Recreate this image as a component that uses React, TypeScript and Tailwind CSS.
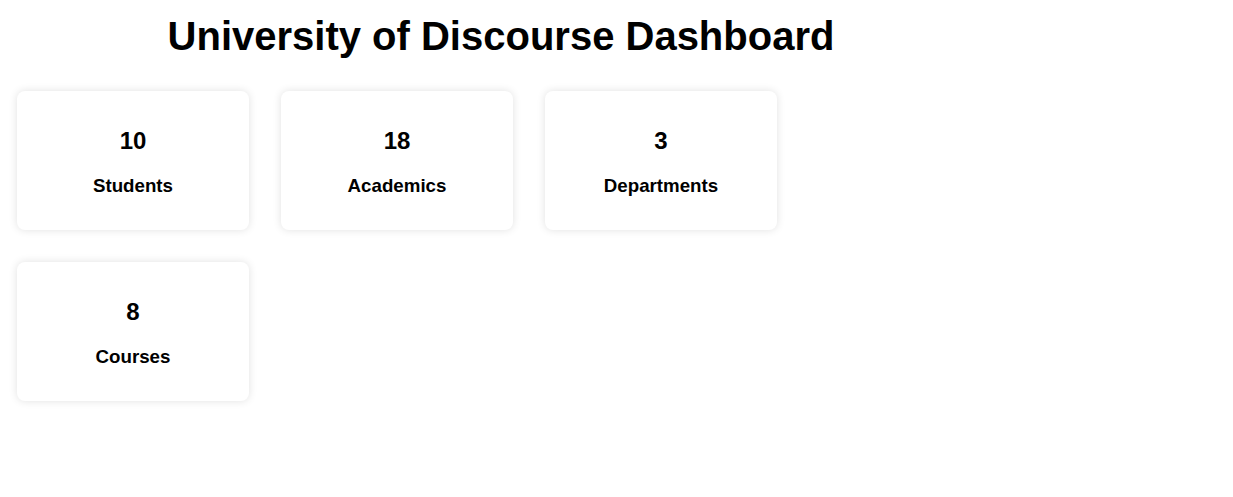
import React from "react";

const stats = [
  { value: 10, label: "Students" },
  { value: 18, label: "Academics" },
  { value: 3, label: "Departments" },
  { value: 8, label: "Courses" },
];

function StatCard({ value, label }: { value: number; label: string }) {
  return (
    <div className="w-[232px] h-[139px] bg-white rounded-lg shadow-[0_0_8px_rgba(0,0,0,0.12)] flex flex-col items-center pt-[38px]">
      <h2 className="text-[24px] font-bold leading-none">{value}</h2>
      <h3 className="text-[18.72px] font-bold leading-none mt-[24px]">{label}</h3>
    </div>
  );
}

export default function App() {
  return (
    <div className="w-[1002px] bg-white text-black font-['Liberation_Sans',Arial,sans-serif] pb-8">
      <h1 className="text-[40px] font-bold text-center leading-none pt-[16px]">
        University of Discourse Dashboard
      </h1>
      <div className="flex flex-wrap gap-8 pl-[17px] pt-[35px]">
        {stats.map(s => (
          <StatCard key={s.label} value={s.value} label={s.label} />
        ))}
      </div>
    </div>
  );
}
